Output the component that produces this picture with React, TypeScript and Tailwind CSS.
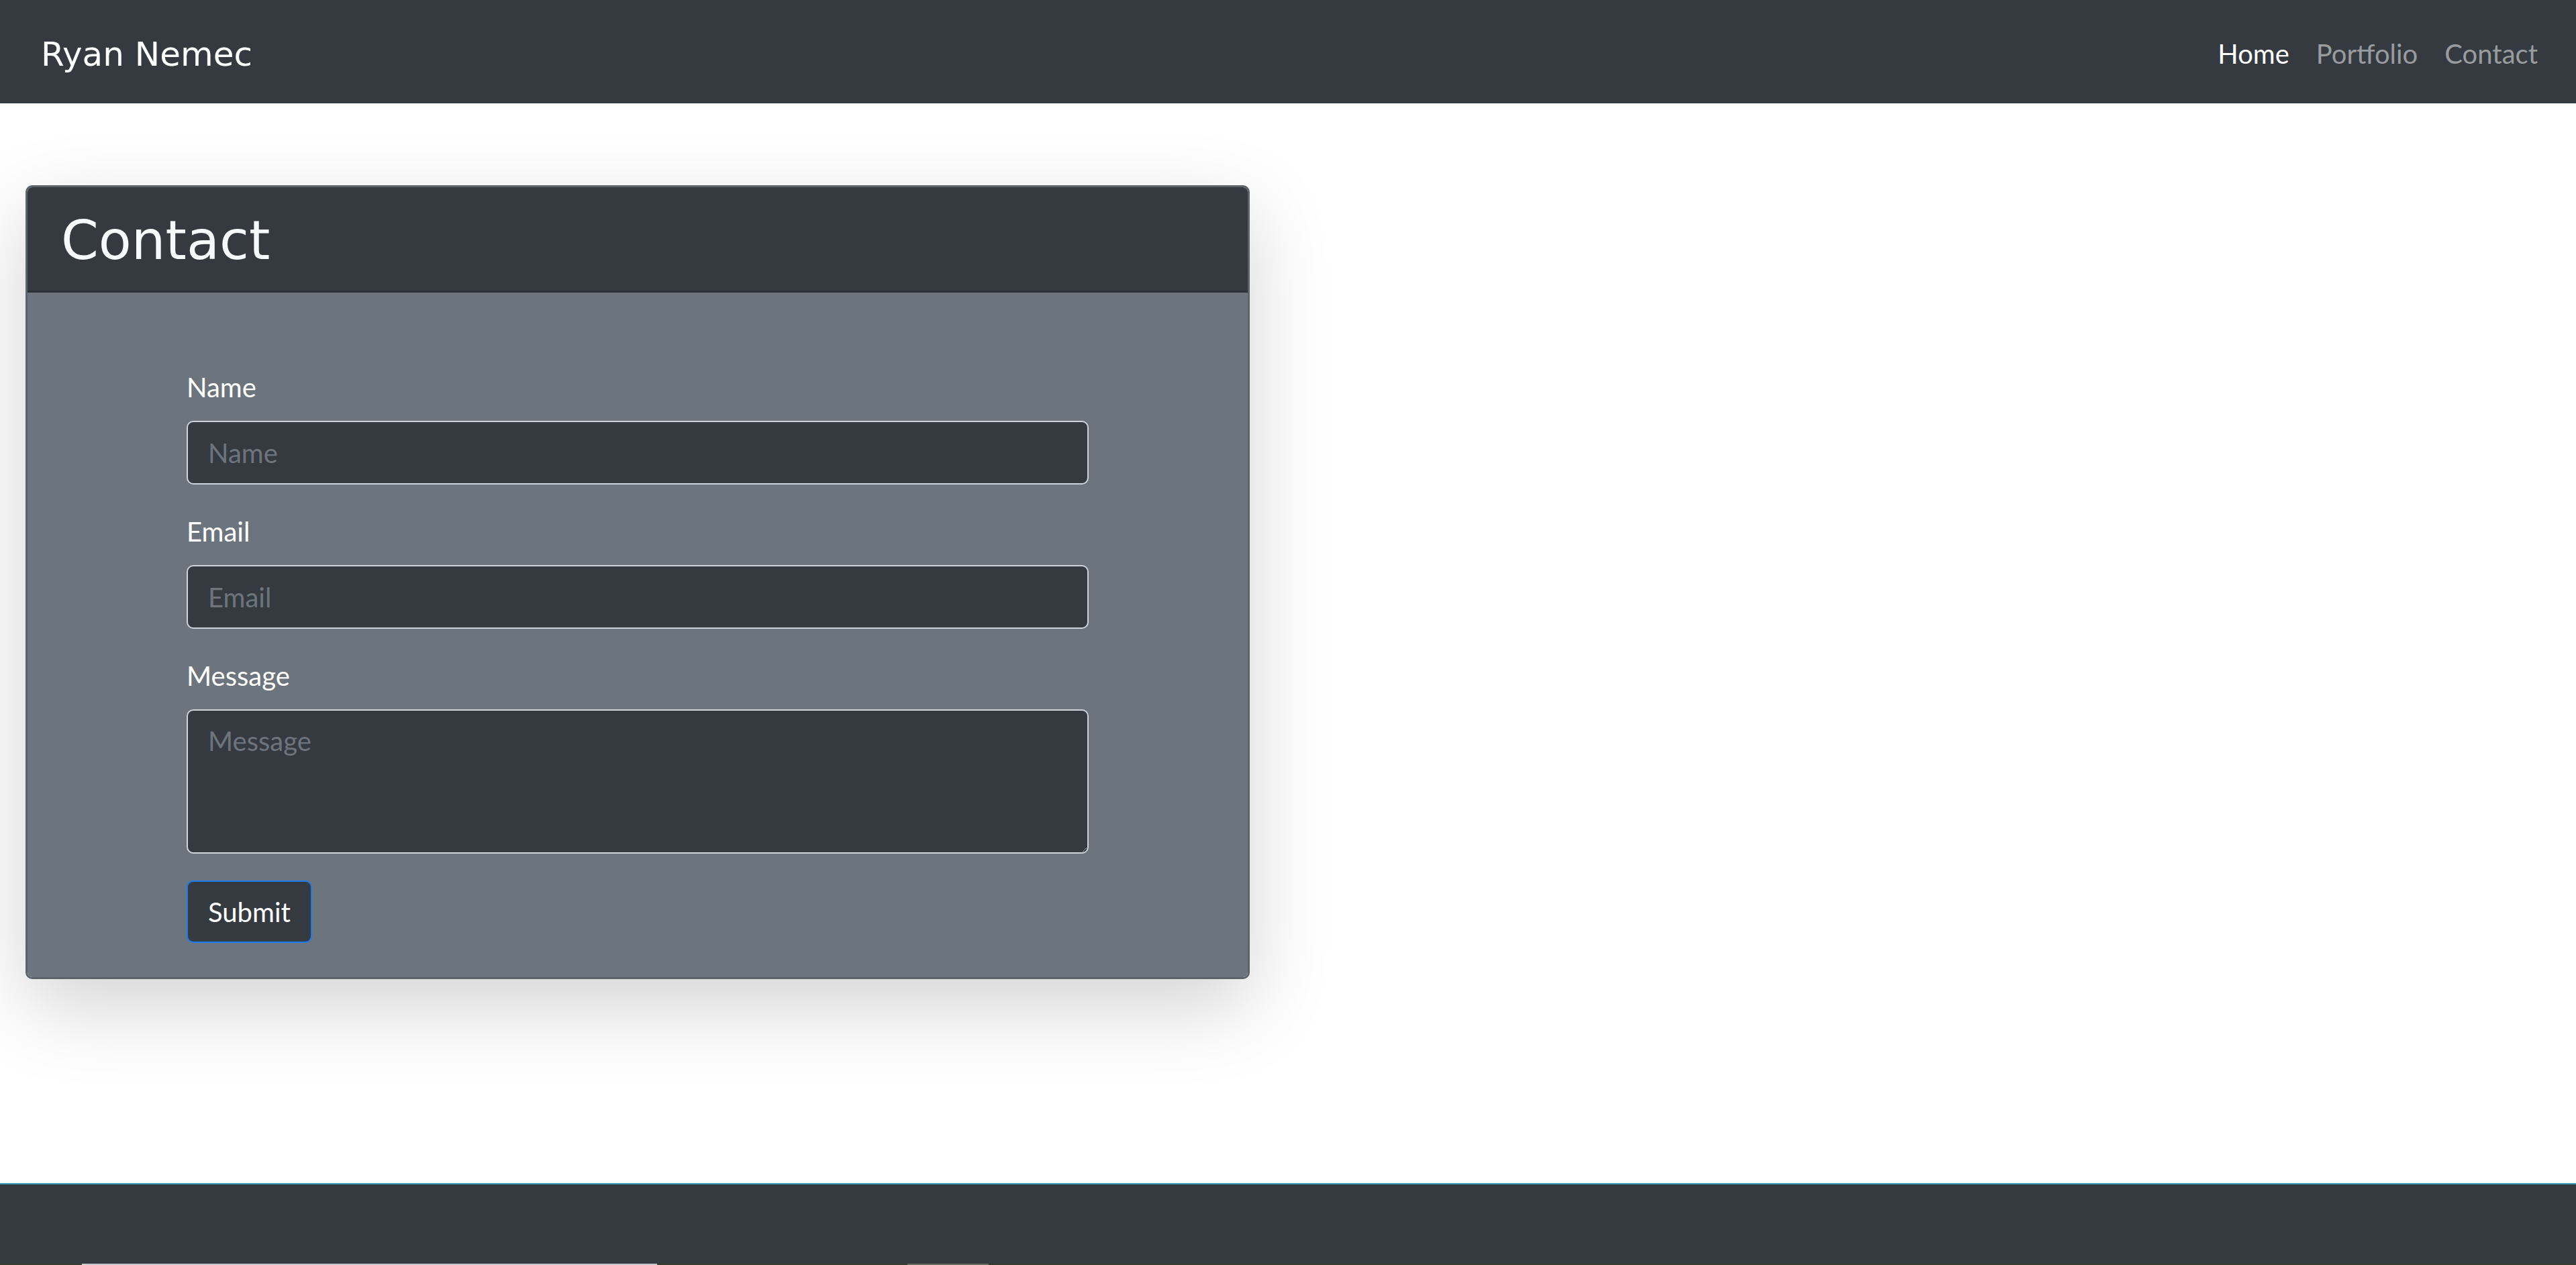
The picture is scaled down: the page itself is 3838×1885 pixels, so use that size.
import React from "react";

const sans = "font-['Lato','Open_Sans',sans-serif]";
const deja = "font-['DejaVu_Sans',sans-serif]";

const fieldClass =
  "block w-full rounded-[10px] border-[2.5px] border-[#ced4da] bg-[#343a40] px-[30px] py-[15px] text-[40px] leading-[60px] text-white placeholder:text-[#6c757d] outline-none";

const Field: React.FC<{ label: string; type?: string; area?: boolean }> = ({ label, type = "text", area }) => (
  <div className="mb-[40px]">
    <label className="mb-[20px] block text-[40px] leading-[60px] text-white">{label}</label>
    {area ? (
      <textarea rows={3} placeholder={label} className={`${fieldClass} h-[215px]`} />
    ) : (
      <input type={type} placeholder={label} className={`${fieldClass} h-[95px]`} />
    )}
  </div>
);

const App: React.FC = () => {
  const links = [
    { name: "Home", active: true },
    { name: "Portfolio", active: false },
    { name: "Contact", active: false },
  ];

  return (
    <div className={`flex h-[1885px] flex-col overflow-hidden bg-white ${sans}`}>
      {/* navbar */}
      <nav className="flex h-[154px] shrink-0 items-start justify-between bg-[#343a40] pl-[61px] pr-[37px]">
        <a className={`pt-[44px] text-[50px] leading-[75px] text-white ${deja}`}>Ryan Nemec</a>
        <ul className="flex pt-[50px]">
          {links.map((l) => (
            <li key={l.name}>
              <a className={`block px-[20px] text-[40px] leading-[60px] ${l.active ? "text-white" : "text-white/50"}`}>
                {l.name}
              </a>
            </li>
          ))}
        </ul>
      </nav>

      <main className="flex-1 pl-[38px] pt-[122px]">
        <div className="w-[1824px] overflow-hidden rounded-[10px] border-[3px] border-[#5c636a] shadow-[0_40px_120px_rgba(0,0,0,0.175)]">
          <div className="border-b-[3px] border-[#2b3035] bg-[#343a40] px-[50px] pb-[26px] pt-[32px]">
            <h2 className={`text-[80px] leading-[96px] text-[#f8f9fa] ${deja}`}>Contact</h2>
          </div>
          <div className="bg-[#6c757d] px-[237px] pb-[51px] pt-[111px]">
            <form onSubmit={(e) => e.preventDefault()}>
              <Field label="Name" />
              <Field label="Email" type="email" />
              <Field label="Message" area />
              <button
                type="submit"
                className="h-[93px] rounded-[10px] border-[2.5px] border-[#1a7cf0] bg-[#343a40] px-[30px] text-[40px] leading-[60px] text-white"
              >
                Submit
              </button>
            </form>
          </div>
        </div>
      </main>

      <footer className="h-[122px] shrink-0 border-t-2 border-[#2f9bb0] bg-[#343a40] flex flex-col justify-end">
        <div className="flex h-[2px]">
          <div className="w-[122px] bg-[#3a3a30]" />
          <div className="w-[857px] bg-[#c9c9c9]" />
          <div className="w-[373px] bg-[#3e3d35]" />
          <div className="w-[121px] bg-[#6b6c62]" />
          <div className="flex-1 bg-[#3a3a30]" />
        </div>
      </footer>
    </div>
  );
};

export default App;
